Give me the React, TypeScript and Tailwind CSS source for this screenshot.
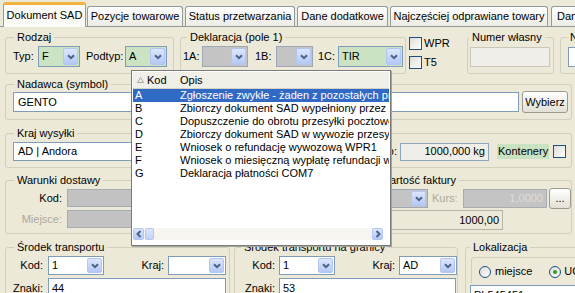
import React from "react";

function Chevron({ dir = "down" }: { dir?: "down" | "left" | "right" }) {
  if (dir === "down")
    return (
      <svg width="8" height="6" viewBox="0 0 8 6">
        <path d="M1 1.2 L4 4.2 L7 1.2" stroke="#4D6185" strokeWidth="2" fill="none" />
      </svg>
    );
  const d = dir === "left" ? "M4.5 1 L1.5 4 L4.5 7" : "M1.5 1 L4.5 4 L1.5 7";
  return (
    <svg width="6" height="8" viewBox="0 0 6 8">
      <path d={d} stroke="#4D6185" strokeWidth="2" fill="none" />
    </svg>
  );
}

function ArrowBtn() {
  return (
    <div className="self-stretch w-[15px] shrink-0 rounded-[2px] border border-[#B3C6F3] bg-gradient-to-b from-[#DCE6FD] to-[#B4C8F5] flex items-center justify-center">
      <Chevron />
    </div>
  );
}

function Combo({ cls, value = "", tone = "white" }: { cls: string; value?: string; tone?: "white" | "green" | "gray" }) {
  const bg = tone === "green" ? "bg-[#CBE3C3]" : tone === "gray" ? "bg-[#C4C4C4]" : "bg-white";
  const bd = tone === "gray" ? "border-[#9FA7B4]" : "border-[#7F9DB9]";
  return (
    <div className={`shrink-0 flex items-center justify-between border ${bd} ${bg} pl-[3px] py-[1px] pr-[1px] ${cls}`}>
      <span className="whitespace-nowrap">{value}</span>
      <ArrowBtn />
    </div>
  );
}

function Check({ cls = "" }: { cls?: string }) {
  return <div className={`shrink-0 w-[13px] h-[13px] border border-[#1C5180] bg-gradient-to-br from-[#DCDCD7] to-white ${cls}`} />;
}

function Radio({ checked = false }: { checked?: boolean }) {
  return (
    <div className="shrink-0 w-[12px] h-[12px] rounded-full border border-[#1C5180] bg-gradient-to-br from-[#DCDCD7] to-white flex items-center justify-center">
      {checked && <div className="w-[4px] h-[4px] rounded-full bg-[#21A121]" />}
    </div>
  );
}

function Btn({ cls, children }: { cls: string; children: React.ReactNode }) {
  return (
    <div className={`shrink-0 flex items-center justify-center rounded-[3px] border border-[#9D9B8E] bg-gradient-to-b from-white to-[#E2E0D4] ${cls}`}>
      {children}
    </div>
  );
}

function Tab({ cls, children }: { cls: string; children: React.ReactNode }) {
  return (
    <div className={`shrink-0 h-[20px] flex items-center bg-gradient-to-b from-white to-[#ECEBE4] border border-b-0 border-[#919B9C] rounded-t-[3px] ${cls}`}>
      {children}
    </div>
  );
}

const rows: [string, string][] = [
  ["A", "Zgłoszenie zwykłe - żaden z pozostałych przypadków"],
  ["B", "Zbiorczy dokument SAD wypełniony przez eksportera"],
  ["C", "Dopuszczenie do obrotu przesyłki pocztowej"],
  ["D", "Zbiorczy dokument SAD w wywozie przesyłek"],
  ["E", "Wniosek o refundację wywozową WPR1"],
  ["F", "Wniosek o miesięczną wypłatę refundacji wywozowej"],
  ["G", "Deklaracja płatności COM7"],
];

export default function App() {
  return (
    <div className="relative w-[575px] h-[293px] overflow-hidden bg-[#ECE9D8] text-[11px] leading-[13px] text-black font-['Liberation_Sans',Arial,sans-serif]">
      {/* tabs */}
      <div className="flex items-end h-[27px] pl-[3px] border-b border-[#919B9C] whitespace-nowrap w-[700px]">
        <div className="shrink-0 relative z-10 -mb-px h-[25px] w-[83px] flex items-center justify-center bg-[#FAFAF6] border-x border-[#919B9C] border-t-[3px] border-t-[#F3B23E] rounded-t-[3px] pb-[2px]">
          Dokument SAD
        </div>
        <Tab cls="ml-[1px] w-[96px] justify-center">Pozycje towarowe</Tab>
        <Tab cls="ml-[2px] w-[110px] justify-center">Status przetwarzania</Tab>
        <Tab cls="ml-[2px] w-[91px] justify-center">Dane dodatkowe</Tab>
        <Tab cls="ml-[2px] w-[158px] justify-center">Najczęściej odprawiane towary</Tab>
        <Tab cls="ml-[3px] w-[90px] pl-[5px]">Dane celne</Tab>
      </div>

      <div className="pl-[5px] flex flex-col w-[700px] whitespace-nowrap">
        {/* row 1 */}
        <div className="flex mt-[4px]">
          <fieldset className="shrink-0 min-w-0 w-[169px] border border-[#D0D0BF] rounded-[3px]">
            <legend className="ml-[8px] px-[3px]">Rodzaj</legend>
            <div className="flex items-center pl-[7px] pt-[2px] pb-[6px]">
              <span className="w-[25px] shrink-0">Typ:</span>
              <Combo cls="w-[42px] h-[21px]" value="F" tone="green" />
              <span className="ml-[6px] w-[39px] shrink-0">Podtyp:</span>
              <Combo cls="w-[42px] h-[21px]" value="A" tone="green" />
            </div>
          </fieldset>
          <fieldset className="shrink-0 min-w-0 ml-[6px] w-[226px] border border-[#D0D0BF] rounded-[3px]">
            <legend className="ml-[6px] px-[3px]">Deklaracja (pole 1)</legend>
            <div className="flex items-center pl-[2px] pt-[2px] pb-[6px]">
              <span className="w-[19px] shrink-0">1A:</span>
              <Combo cls="w-[46px] h-[21px]" tone="gray" />
              <span className="ml-[7px] w-[21px] shrink-0">1B:</span>
              <Combo cls="w-[37px] h-[21px]" tone="gray" />
              <span className="ml-[5px] w-[20px] shrink-0">1C:</span>
              <Combo cls="w-[65px] h-[21px]" value="TIR" tone="green" />
            </div>
          </fieldset>
          <div className="shrink-0 self-start ml-[3px] mt-[6px] w-[50px] flex flex-col gap-[6px]">
            <div className="flex items-center">
              <Check />
              <span className="ml-[2px]">WPR</span>
            </div>
            <div className="flex items-center">
              <Check />
              <span className="ml-[2px]">T5</span>
            </div>
          </div>
          <fieldset className="shrink-0 min-w-0 ml-[8px] w-[87px] border border-[#D0D0BF] rounded-[3px]">
            <legend className="ml-[1px] px-[3px]">Numer własny</legend>
            <div className="pl-[2px] pt-[3px]">
              <div className="w-[80px] h-[20px] border border-[#C9C7BA] bg-[#EFEEE8]" />
            </div>
          </fieldset>
          <fieldset className="shrink-0 min-w-0 ml-[6px] w-[100px] border border-[#D0D0BF] rounded-[3px]">
            <legend className="ml-[6px] px-[3px]">Numer</legend>
            <div className="pl-[7px] pt-[3px]">
              <div className="w-[80px] h-[20px] border border-[#7F9DB9] bg-white" />
            </div>
          </fieldset>
        </div>

        {/* row 2 */}
        <fieldset className="shrink-0 min-w-0 mt-[4px] w-[567px] border border-[#D0D0BF] rounded-[3px]">
          <legend className="ml-[8px] px-[3px]">Nadawca (symbol)</legend>
          <div className="flex items-center h-[22px] pl-[7px] mb-[6px]">
            <div className="shrink-0 w-[506px] h-[20px] bg-white border border-[#7F9DB9] pl-[4px] flex items-center">GENTO</div>
            <Btn cls="ml-[3px] w-[46px] h-[22px]">Wybierz</Btn>
          </div>
        </fieldset>

        {/* row 3 */}
        <fieldset className="shrink-0 min-w-0 mt-[7px] w-[567px] border border-[#D0D0BF] rounded-[3px]">
          <legend className="ml-[8px] px-[3px]">Kraj wysyłki</legend>
          <div className="flex items-center h-[19px] pl-[7px] mt-[2px] mb-[6px]">
            <div className="shrink-0 w-[300px] h-[19px] bg-white border border-[#7F9DB9] pl-[4px] flex items-center">AD | Andora</div>
            <span className="shrink-0 w-[84px] text-right">Masa brutto:</span>
            <div className="shrink-0 ml-[3px] w-[89px] h-[18px] bg-[#EFEEE8] border border-[#8FA6BE] flex items-center justify-end pr-[3px]">1000,000 kg</div>
            <div className="shrink-0 ml-[8px] w-[52px] h-[15px] bg-[#C9E2C1] flex items-center pl-[1px]">Kontenery</div>
            <Check cls="ml-[4px]" />
          </div>
        </fieldset>

        {/* row 4 */}
        <div className="flex mt-[6px]">
          <fieldset className="shrink-0 min-w-0 w-[357px] border border-[#D0D0BF] rounded-[3px]">
            <legend className="ml-[8px] px-[3px]">Warunki dostawy</legend>
            <div className="pl-[7px] pt-[2px] pb-[5px] flex flex-col gap-[3px]">
              <div className="flex items-center">
                <span className="shrink-0 w-[49px] text-right">Kod:</span>
                <div className="shrink-0 ml-[5px] w-[240px] h-[18px] bg-[#C2C2C2] border border-[#A5ACB2]" />
              </div>
              <div className="flex items-center">
                <span className="shrink-0 w-[49px] text-right text-[#ACA899]">Miejsce:</span>
                <div className="shrink-0 ml-[5px] w-[240px] h-[18px] bg-[#C2C2C2] border border-[#A5ACB2]" />
              </div>
            </div>
          </fieldset>
          <fieldset className="shrink-0 min-w-0 ml-[6px] w-[204px] border border-[#D0D0BF] rounded-[3px]">
            <legend className="ml-[8px] px-[3px]">Wartość faktury</legend>
            <div className="pl-[3px] pt-[1px]">
              <div className="flex items-center h-[21px]">
                <Combo cls="w-[56px] h-[19px]" tone="gray" />
                <span className="shrink-0 ml-[4px] w-[31px] text-[#ACA899]">Kurs:</span>
                <div className="shrink-0 w-[84px] h-[19px] bg-[#C4C4C4] border border-[#A5ACB2] flex items-center justify-end pr-[3px] text-[#DCDCDC]">1,0000</div>
                <Btn cls="ml-[2px] w-[22px] h-[21px]">...</Btn>
              </div>
              <div className="mt-[1px] w-[131px] h-[20px] border border-[#B8B5A6] flex items-center justify-end pr-[3px]">1000,00</div>
            </div>
          </fieldset>
        </div>

        {/* row 5 */}
        <div className="flex mt-[7px]">
          <fieldset className="shrink-0 min-w-0 w-[225px] h-[70px] border border-[#D0D0BF] rounded-[3px]">
            <legend className="ml-[8px] px-[3px]">Środek transportu</legend>
            <div className="pl-[1px] pt-[2px] flex flex-col gap-[3px]">
              <div className="flex items-center">
                <span className="shrink-0 w-[36px] text-right">Kod:</span>
                <Combo cls="ml-[5px] w-[56px] h-[19px]" value="1" />
                <span className="shrink-0 w-[60px] text-right">Kraj:</span>
                <Combo cls="ml-[4px] w-[58px] h-[19px]" />
              </div>
              <div className="flex items-center">
                <span className="shrink-0 w-[36px] text-right">Znaki:</span>
                <div className="shrink-0 ml-[5px] w-[178px] h-[20px] bg-white border border-[#7F9DB9] pl-[3px] flex items-center">44</div>
              </div>
            </div>
          </fieldset>
          <fieldset className="shrink-0 min-w-0 ml-[4px] w-[224px] h-[70px] border border-[#D0D0BF] rounded-[3px]">
            <legend className="ml-[6px] px-[3px]">Środek transportu na granicy</legend>
            <div className="pl-[1px] pt-[2px] flex flex-col gap-[3px]">
              <div className="flex items-center">
                <span className="shrink-0 w-[39px] text-right">Kod:</span>
                <Combo cls="ml-[4px] w-[56px] h-[19px]" value="1" />
                <span className="shrink-0 w-[60px] text-right">Kraj:</span>
                <Combo cls="ml-[4px] w-[58px] h-[19px]" value="AD" />
              </div>
              <div className="flex items-center">
                <span className="shrink-0 w-[39px] text-right">Znaki:</span>
                <div className="shrink-0 ml-[4px] w-[177px] h-[20px] bg-white border border-[#7F9DB9] pl-[3px] flex items-center">53</div>
              </div>
            </div>
          </fieldset>
          <fieldset className="shrink-0 min-w-0 ml-[7px] w-[130px] h-[70px] border border-[#D0D0BF] rounded-[3px]">
            <legend className="ml-[4px] px-[3px]">Lokalizacja</legend>
            <div className="pl-[5px] pt-[3px] flex flex-col">
              <div className="h-[26px] border-t border-l border-[#D0D0BF] rounded-tl-[3px] flex items-center pl-[7px] pt-[2px]">
                <Radio />
                <span className="ml-[4px]">miejsce</span>
                <div className="ml-[17px]">
                  <Radio checked />
                </div>
                <span className="ml-[3px]">UC</span>
              </div>
              <div className="-ml-[1px] mt-[2px] h-[20px] w-[110px] bg-white border border-[#7F9DB9] pl-[3px] flex items-center">PL545451</div>
            </div>
          </fieldset>
        </div>
      </div>

      {/* dropdown list popup */}
      <div className="absolute z-20 left-[131px] top-[70px] w-[260px] h-[176px] bg-white border border-[#7A7A7A] flex flex-col whitespace-nowrap shadow-[1px_1px_0_#A8A69A]">
        <div className="mx-[1px] mt-[1px] h-[17px] shrink-0 flex items-center bg-[#F0EFE8] border-b border-[#D5D2C3]">
          <div className="w-[47px] shrink-0 flex items-center pl-[4px]">
            <svg width="7" height="6" viewBox="0 0 7 6">
              <path d="M3.5 0.5 L6.5 5.5 L0.5 5.5 Z" fill="none" stroke="#A9A79C" strokeWidth="1" />
            </svg>
            <span className="ml-[3px]">Kod</span>
          </div>
          <span>Opis</span>
        </div>
        <div className="mx-[1px] flex flex-col overflow-hidden w-[256px]">
          {rows.map(([k, t], i) => (
            <div key={k} className={`h-[13px] flex items-center ${i === 0 ? "bg-[#316AC5] text-white" : ""}`}>
              <span className="w-[47px] shrink-0 pl-[2px]">{k}</span>
              <span>{t}</span>
            </div>
          ))}
        </div>
        <div className="flex-1" />
        <div className="mx-[1px] mb-[5px] h-[12px] flex items-stretch w-[250px] bg-[#F6F5F0]">
          <div className="w-[11px] rounded-[2px] border border-[#B3C6F3] bg-gradient-to-b from-[#DCE6FD] to-[#B4C8F5] flex items-center justify-center">
            <Chevron dir="left" />
          </div>
          <div className="ml-[1px] w-[9px] rounded-[2px] border border-[#B3C6F3] bg-gradient-to-b from-[#DCE6FD] to-[#C2D3F8]" />
          <div className="flex-1" />
          <div className="w-[11px] rounded-[2px] border border-[#B3C6F3] bg-gradient-to-b from-[#DCE6FD] to-[#B4C8F5] flex items-center justify-center">
            <Chevron dir="right" />
          </div>
        </div>
      </div>
    </div>
  );
}
